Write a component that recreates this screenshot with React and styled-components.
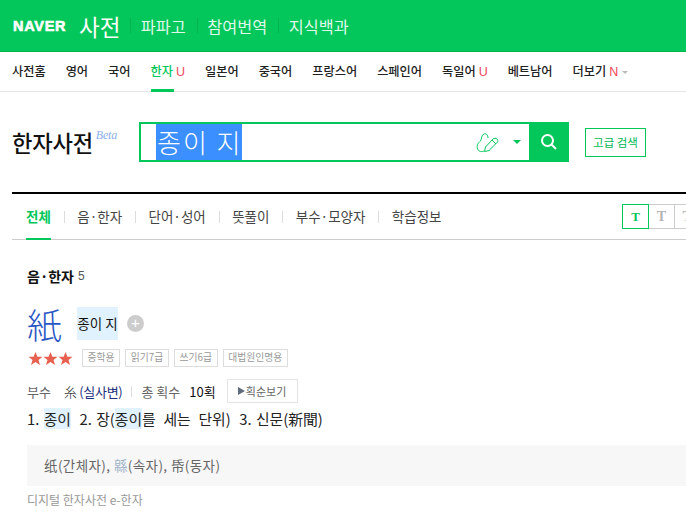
import React from "react";
import styled, { createGlobalStyle } from "styled-components";

const GlobalStyle = createGlobalStyle`
    html, body {
        margin: 0;
        padding: 0;
        width: 686px;
        height: 521px;
        overflow: hidden;
        background: #fff;
        font-family: "Noto Sans CJK KR", "Liberation Sans", sans-serif;
    }
`;

const Page = styled.div`
    width: 686px;
    height: 521px;
    overflow: hidden;
`;

const Header = styled.div`
    height: 51px;
    border-bottom: 1px solid #02b350;
    background: #03c75a;
    display: flex;
    align-items: center;
    padding-left: 13px;
    color: #fff;
`;

const Logo = styled.div`
    font-family: "Liberation Sans", sans-serif;
    font-weight: 700;
    font-size: 14.5px;
    letter-spacing: 0.7px;
    -webkit-text-stroke: 0.6px #fff;
    width: 66px;
`;

const HeaderTitle = styled.div`
    font-size: 22.5px;
    line-height: 24px;
    width: 51px;
`;

const HeaderLink = styled.div`
    font-size: 16.3px;
    line-height: 22px;
    color: #dff7e9;
    padding: 0 10.8px;
    position: relative;
    &::before {
        content: "";
        position: absolute;
        left: 0;
        top: 3px;
        width: 1px;
        height: 15px;
        background: #02b350;
    }
`;

const Nav = styled.div`
    height: 39px;
    border-bottom: 1px solid #e4e4e4;
    display: flex;
    padding-left: 12px;
    gap: 20px;
`;

const NavItem = styled.div`
    position: relative;
    font-size: 12.2px;
    font-weight: 500;
    line-height: 39px;
    white-space: nowrap;
    color: ${(p) => (p.$active ? "#03c75a" : "#222")};
    ${(p) =>
        p.$active &&
        `&::after {
            content: "";
            position: absolute;
            left: 0;
            width: 23px;
            bottom: -1px;
            height: 3px;
            background: #03c75a;
        }`}
`;

const Badge = styled.span`
    font-family: "Liberation Sans", sans-serif;
    font-weight: 400;
    font-size: 12.5px;
    color: #f0475a;
    margin-left: 3px;
`;

const Caret = styled.span`
    display: inline-block;
    margin-left: 4px;
    vertical-align: 2px;
    border-left: 3px solid transparent;
    border-right: 3px solid transparent;
    border-top: 3px solid #bbb;
`;

const SearchRow = styled.div`
    display: flex;
    align-items: flex-start;
    padding: 30px 0 0 12px;
    height: 70px;
`;

const BrandTitle = styled.div`
    width: 127px;
    font-size: 22.2px;
    font-weight: 500;
    line-height: 40px;
    color: #111;
    display: flex;
    letter-spacing: -0.2px;
`;

const BetaMark = styled.span`
    font-family: "Liberation Serif", serif;
    font-style: italic;
    font-size: 12px;
    line-height: 12px;
    margin: 7px 0 0 3px;
    color: #8ab0e8;
`;

const SearchBox = styled.div`
    box-sizing: border-box;
    width: 430px;
    height: 40px;
    border: 2px solid #03c75a;
    display: flex;
    align-items: stretch;
`;

const SearchText = styled.div`
    flex: 1;
    padding-left: 15px;
    display: flex;
    align-items: stretch;
`;

const Selected = styled.span`
    background: #3b8fff;
    color: #fff;
    font-size: 26px;
    font-weight: 300;
    line-height: 35px;
    width: 86px;
    padding-left: 1px;
    box-sizing: border-box;
    letter-spacing: 2px;
    white-space: nowrap;
    overflow: hidden;
`;

const PenButton = styled.div`
    display: flex;
    align-items: center;
    padding-right: 8px;
`;

const GreenCaret = styled.span`
    margin-left: 13px;
    border-left: 4px solid transparent;
    border-right: 4px solid transparent;
    border-top: 4px solid #03c75a;
`;

const SearchButton = styled.div`
    width: 40px;
    margin: -2px -2px -2px 0;
    background: #03c75a;
    display: flex;
    align-items: center;
    justify-content: center;
`;

const AdvancedButton = styled.div`
    box-sizing: border-box;
    width: 61px;
    height: 29px;
    margin: 6px 0 0 16px;
    border: 1px solid #03c75a;
    color: #03b855;
    font-size: 11.5px;
    line-height: 27px;
    text-align: center;
    white-space: nowrap;
`;

const Tabs = styled.div`
    margin: 0 0 0 12px;
    height: 45px;
    border-top: 2px solid #000;
    border-bottom: 1px solid #ccc;
    display: flex;
    align-items: center;
    padding-left: 14px;
    position: relative;
`;

const Tab = styled.div`
    position: relative;
    font-size: 13.5px;
    line-height: 45px;
    height: 45px;
    white-space: nowrap;
    font-weight: ${(p) => (p.$active ? 700 : 400)};
    color: ${(p) => (p.$active ? "#03c75a" : "#444")};
    margin-right: 26.4px;
    ${(p) =>
        p.$active &&
        `&::before {
            content: "";
            position: absolute;
            left: 0;
            right: 0;
            bottom: -1px;
            height: 2px;
            background: #03c75a;
        }`}
    ${(p) =>
        p.$divided &&
        `&::after {
            content: "";
            position: absolute;
            right: -14px;
            top: 17px;
            width: 1px;
            height: 12px;
            background: #ddd;
        }`}
`;

const FontSizes = styled.div`
    position: absolute;
    left: 610px;
    top: 10px;
    display: flex;
`;

const FontSize = styled.div`
    box-sizing: border-box;
    width: 27px;
    height: 25px;
    margin-right: -1px;
    border: 1px solid ${(p) => (p.$active ? "#03c75a" : "#ccc")};
    position: relative;
    z-index: ${(p) => (p.$active ? 1 : 0)};
    font-family: "Liberation Serif", serif;
    font-weight: 700;
    font-size: ${(p) => p.$size}px;
    line-height: 23px;
    text-align: center;
    color: ${(p) => (p.$active ? "#03c75a" : "#b4b4b4")};
`;

const Content = styled.div`
    padding: 26px 0 0 27px;
`;

const SectionTitle = styled.div`
    font-size: 14px;
    font-weight: 700;
    line-height: 20px;
    color: #111;
    display: flex;
    align-items: center;
`;

const Count = styled.span`
    font-family: "Liberation Sans", sans-serif;
    font-weight: 400;
    font-size: 12px;
    color: #555;
    margin-left: 4px;
`;

const EntryHead = styled.div`
    display: flex;
    align-items: center;
    margin-top: 21px;
    height: 33px;
`;

const Hanja = styled.div`
    width: 50px;
    font-family: "Noto Sans CJK KR", sans-serif;
    font-weight: 300;
    font-size: 35px;
    line-height: 33px;
    color: #2a57c4;
`;

const Highlight = styled.span`
    background: #e1f2ff;
`;

const EntryMeaning = styled(Highlight)`
    font-size: 13.5px;
    line-height: 33px;
    color: #111;
    width: 41px;
    text-align: center;
    white-space: nowrap;
`;

const PlusIcon = styled.span`
    width: 17px;
    height: 17px;
    margin-left: 9px;
    border-radius: 50%;
    background: #ccc;
    color: #fff;
    font-family: "Liberation Sans", sans-serif;
    font-size: 15px;
    line-height: 16px;
    text-align: center;
`;

const GradeRow = styled.div`
    display: flex;
    align-items: center;
    margin-top: 9px;
    height: 18px;
`;

const Stars = styled.div`
    display: flex;
    width: 54px;
    margin-left: 1px;
`;

const Grade = styled.span`
    box-sizing: border-box;
    height: 18px;
    padding: 0 4.6px;
    margin-right: 5px;
    border: 1px solid #ddd;
    color: #999;
    font-size: 9.8px;
    line-height: 15px;
    white-space: nowrap;
`;

const InfoRow = styled.div`
    display: flex;
    align-items: center;
    margin-top: 12px;
    height: 24px;
    font-size: 13px;
    color: #111;
    white-space: nowrap;
`;

const InfoLabel = styled.span`
    color: #666;
    margin-right: ${(p) => p.$gap}px;
`;

const Radical = styled.span`
    color: #1c2f7a;
    letter-spacing: -0.3px;
    margin-left: -1px;
`;

const RadicalChar = styled.span`
    font-weight: 300;
    color: #222;
`;

const Divider = styled.span`
    width: 1px;
    height: 11px;
    background: #ddd;
    margin: 0 9px;
`;

const StrokeButton = styled.div`
    box-sizing: border-box;
    height: 24px;
    width: 71px;
    margin-left: 11px;
    border: 1px solid #e4e4e4;
    display: flex;
    align-items: center;
    justify-content: center;
    font-size: 11px;
    color: #666;
    gap: 1px;
`;

const PlayMark = styled.span`
    border-left: 7px solid #5f6b7a;
    border-top: 4px solid transparent;
    border-bottom: 4px solid transparent;
`;

const Meanings = styled.div`
    margin-top: 2px;
    font-size: 14.8px;
    line-height: 28px;
    color: #222;
    white-space: nowrap;
    word-spacing: 1px;
`;

const WideWords = styled.span`
    word-spacing: 4.5px;
`;

const Variants = styled.div`
    margin-top: 12px;
    height: 41px;
    padding-left: 17px;
    background: #f7f7f7;
    font-size: 13.5px;
    line-height: 41px;
    letter-spacing: 0.4px;
    color: #666;
    white-space: nowrap;
`;

const SimplifiedChar = styled.span`
    font-family: "Noto Sans CJK SC", sans-serif;
`;

const FadedChar = styled.span`
    color: #9fb2c8;
`;

const Source = styled.div`
    margin-top: 6px;
    font-size: 12px;
    line-height: 16px;
    color: #999;
`;

function PenIcon() {
    return (
        <svg width="24" height="22" viewBox="0 0 24 22" fill="none" stroke="#03c75a" strokeWidth="1">
            <path d="M12 7 C12 4 10 2 8 3 C5 4 6 8 4.500 10 C2 12 0.500 14 1.500 18 C3 21 6 21 8 20" />
            <path d="M8.500 20.500 L9.500 16 L17 8 C18 7 20 7 21 8 C22 9 22 10.500 21.500 11 L14 18.500 L13.500 19.500 Z" />
            <path d="M16 9 L20 13" />
        </svg>
    );
}

function SearchIcon() {
    return (
        <svg width="18" height="18" viewBox="0 0 18 18" fill="none" stroke="#fff" strokeWidth="2">
            <circle cx="7.500" cy="7.500" r="5.500" />
            <path d="M11.500 11.500 L16 16" />
        </svg>
    );
}

function Star() {
    return (
        <svg width="15" height="15" viewBox="0 0 16 15">
            <path
                fill="#e8604f"
                d="M8 0.500 L10 5.500 L15.500 5.700 L11.200 9 L12.800 14.500 L8 11.300 L3.200 14.500 L4.800 9 L0.500 5.700 L6 5.500 Z"
            />
        </svg>
    );
}

const navItems = [
    ["사전홈"],
    ["영어"],
    ["국어"],
    ["한자", "U", true],
    ["일본어"],
    ["중국어"],
    ["프랑스어"],
    ["스페인어"],
    ["독일어", "U"],
    ["베트남어"],
    ["더보기", "N"],
];

const tabs = ["전체", "음·한자", "단어·성어", "뜻풀이", "부수·모양자", "학습정보"];
const grades = ["중학용", "읽기7급", "쓰기6급", "대법원인명용"];

export default function App() {
    return (
        <Page>
            <GlobalStyle />
            <Header>
                <Logo>NAVER</Logo>
                <HeaderTitle>사전</HeaderTitle>
                <HeaderLink>파파고</HeaderLink>
                <HeaderLink>참여번역</HeaderLink>
                <HeaderLink>지식백과</HeaderLink>
            </Header>
            <Nav>
                {navItems.map(([label, badge, active]) => (
                    <NavItem key={label} $active={active}>
                        {label}
                        {badge && <Badge>{badge}</Badge>}
                        {label === "더보기" && <Caret />}
                    </NavItem>
                ))}
            </Nav>
            <SearchRow>
                <BrandTitle>
                    한자사전
                    <BetaMark>Beta</BetaMark>
                </BrandTitle>
                <SearchBox>
                    <SearchText>
                        <Selected>종이 지</Selected>
                    </SearchText>
                    <PenButton>
                        <PenIcon />
                        <GreenCaret />
                    </PenButton>
                    <SearchButton>
                        <SearchIcon />
                    </SearchButton>
                </SearchBox>
                <AdvancedButton>고급 검색</AdvancedButton>
            </SearchRow>
            <Tabs>
                {tabs.map((tab, i) => (
                    <Tab key={tab} $active={i === 0} $divided={i < tabs.length - 1}>
                        {tab}
                    </Tab>
                ))}
                <FontSizes>
                    <FontSize $active $size={13}>T</FontSize>
                    <FontSize $size={14}>T</FontSize>
                    <FontSize $size={15}>T</FontSize>
                </FontSizes>
            </Tabs>
            <Content>
                <SectionTitle>
                    음·한자
                    <Count>5</Count>
                </SectionTitle>
                <EntryHead>
                    <Hanja>紙</Hanja>
                    <EntryMeaning>종이 지</EntryMeaning>
                    <PlusIcon>+</PlusIcon>
                </EntryHead>
                <GradeRow>
                    <Stars>
                        <Star />
                        <Star />
                        <Star />
                    </Stars>
                    {grades.map((grade) => (
                        <Grade key={grade}>{grade}</Grade>
                    ))}
                </GradeRow>
                <InfoRow>
                    <InfoLabel $gap={14}>부수</InfoLabel>
                    <Radical>
                        <RadicalChar>糸</RadicalChar> (실사변)
                    </Radical>
                    <Divider />
                    <InfoLabel $gap={9}>총 획수</InfoLabel>
                    10획
                    <StrokeButton>
                        <PlayMark />
                        획순보기
                    </StrokeButton>
                </InfoRow>
                <Meanings>
                    1. <Highlight>종이</Highlight>&nbsp; 2. 장(<Highlight>종이</Highlight>
                    <WideWords>를 세는 단위)</WideWords>&nbsp; 3. 신문(新聞)
                </Meanings>
                <Variants>
                    <SimplifiedChar>纸</SimplifiedChar>(간체자), <FadedChar>緜</FadedChar>(속자), 帋(동자)
                </Variants>
                <Source>디지털 한자사전 e-한자</Source>
            </Content>
        </Page>
    );
}
